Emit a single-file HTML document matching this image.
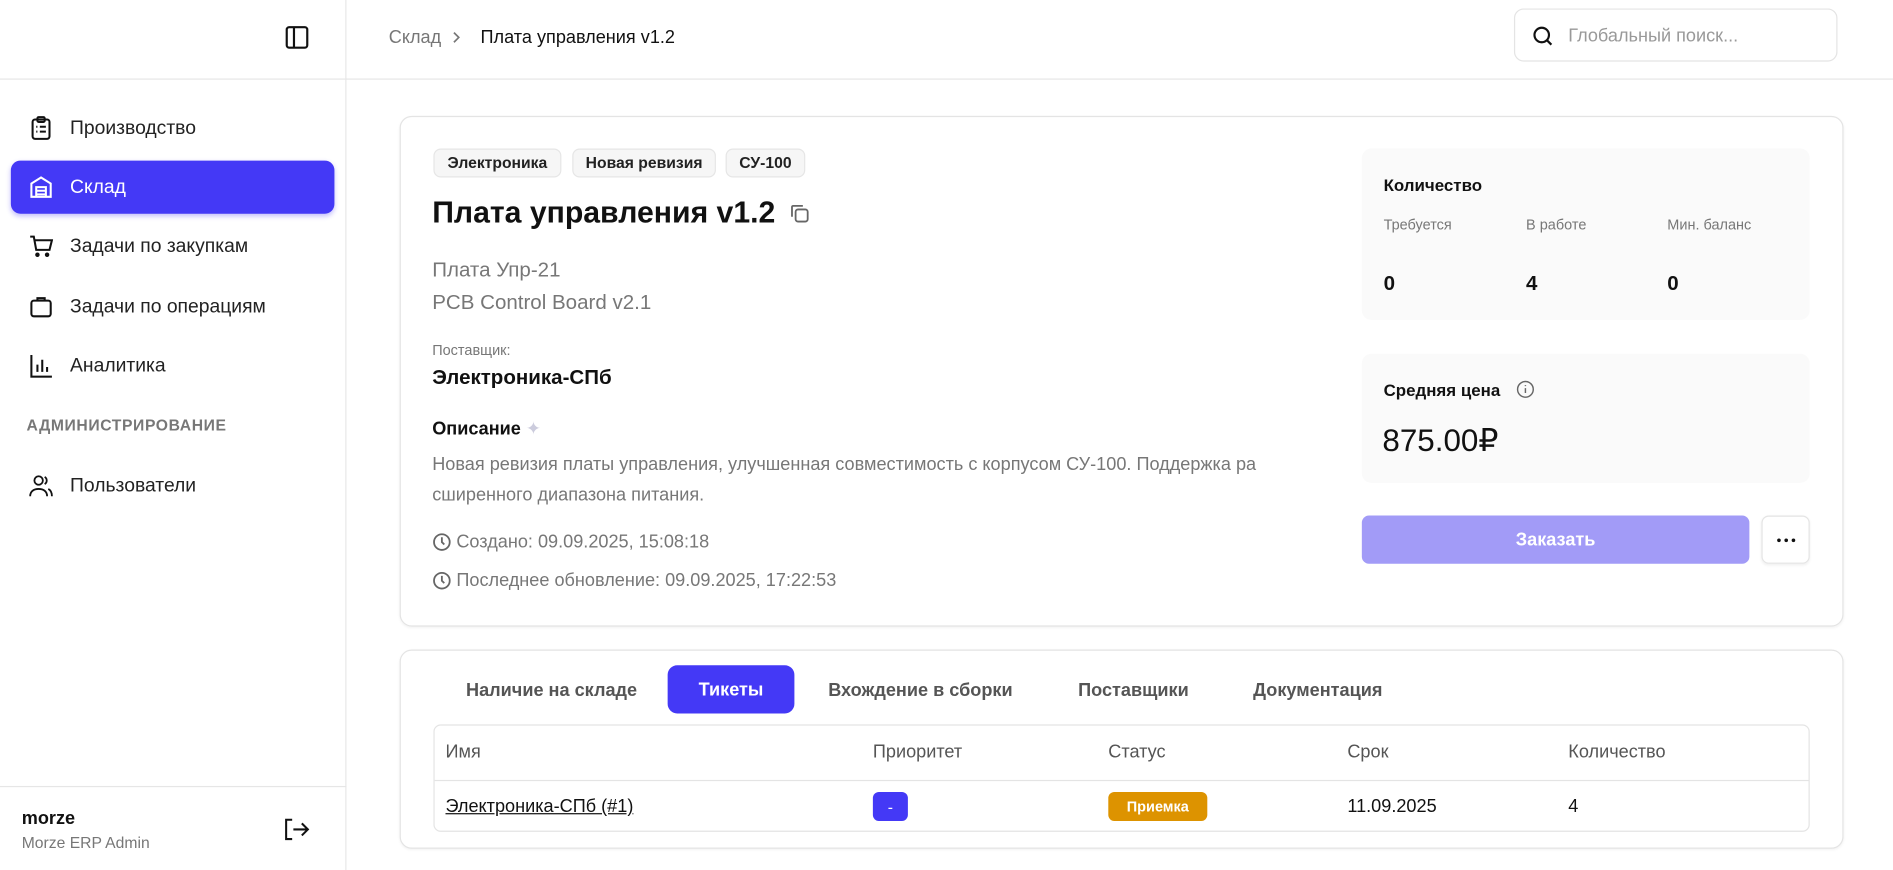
<!DOCTYPE html>
<html><head><meta charset="utf-8"><style>
*{box-sizing:border-box;margin:0;padding:0}
html,body{width:1893px;height:870px;overflow:hidden;background:#fff}
#w{position:absolute;left:0;top:0;width:1568px;height:721px;transform:scale(1.2073);transform-origin:0 0;font-family:"Liberation Sans","Noto Sans CJK SC",sans-serif;color:#111}
.a{position:absolute;white-space:nowrap}
.sb{position:absolute;left:0;top:0;width:287px;height:721px;border-right:1px solid #e8e8e8}
.hl{position:absolute;left:0;top:65px;width:1568px;height:1px;background:#e6e6e6}
.nav{position:absolute;left:58px;font-size:16px;color:#222;transform:translateY(-45%)}
.ic{position:absolute;left:24px;width:20px;height:20px;transform:translateY(-50%)}
.card{position:absolute;border:1px solid #e4e4e4;border-radius:10px;background:#fff;box-shadow:0 1px 2px rgba(0,0,0,.05)}
.tag{position:absolute;top:123px;height:24px;border:1px solid #e6e6e6;border-radius:6px;background:#f6f6f6;font-size:13px;font-weight:bold;line-height:22px;text-align:center;color:#222}
.g{color:#777}
.box{position:absolute;left:1128px;width:371px;background:#fafafa;border-radius:8px}
.m{transform:translateY(-50%)}
.th{font-size:15px;color:#555;top:623px}
.td{font-size:15px;color:#111;top:668px}
.btn{display:flex;align-items:center;justify-content:center}
</style></head><body><div id="w">
<div class="sb"></div>
<div class="hl"></div>
<svg class="a" style="left:236px;top:21px" width="20" height="20" viewBox="0 0 20 20" fill="none" stroke="#111" stroke-width="1.8"><rect x="1.5" y="1.5" width="17" height="17" rx="2"/><line x1="7.5" y1="2" x2="7.5" y2="18"/></svg>
<div class="a m" style="left:322px;top:31px;font-size:15px;color:#777">Склад</div>
<svg class="a" style="left:373px;top:25px" width="10" height="12" viewBox="0 0 10 12" fill="none" stroke="#777" stroke-width="1.4"><path d="M3 2l4 4-4 4"/></svg>
<div class="a m" style="left:398px;top:31px;font-size:15px;color:#111">Плата управления v1.2</div>
<div class="a" style="left:1254px;top:7px;width:268px;height:44px;border:1px solid #e4e4e4;border-radius:8px"></div>
<svg class="a" style="left:1269px;top:21px" width="18" height="18" viewBox="0 0 18 18" fill="none" stroke="#111" stroke-width="1.8"><circle cx="8" cy="8" r="6"/><line x1="12.5" y1="12.5" x2="16" y2="16"/></svg>
<div class="a m" style="left:1299px;top:30px;font-size:15px;color:#999">Глобальный поиск...</div>

<svg class="ic" style="top:106px" viewBox="0 0 20 20" fill="none" stroke="#111" stroke-width="1.7"><rect x="3" y="3" width="14" height="16" rx="2"/><rect x="7" y="1" width="6" height="4" rx="1"/><path d="M6 9h1M9 9h5M6 13h1M9 13h5"/></svg>
<div class="nav" style="top:106px">Производство</div>
<div class="a" style="left:9px;top:133px;width:268px;height:44px;background:#4439f6;border-radius:8px;box-shadow:0 2px 4px rgba(68,57,246,.3)"></div>
<svg class="ic" style="top:155px" viewBox="0 0 20 20" fill="none" stroke="#fff" stroke-width="1.7"><path d="M2 18V7l8-5 8 5v11z"/><path d="M6 18V10h8v8M6 13h8M6 16h8"/></svg>
<div class="nav" style="top:155px;color:#fff">Склад</div>
<svg class="ic" style="top:204px" viewBox="0 0 20 20" fill="none" stroke="#111" stroke-width="1.7"><path d="M1 2h3l2 11h11l2-8H5"/><circle cx="7" cy="17" r="1" fill="#111"/><circle cx="15" cy="17" r="1" fill="#111"/></svg>
<div class="nav" style="top:204px">Задачи по закупкам</div>
<svg class="ic" style="top:254px" viewBox="0 0 20 20" fill="none" stroke="#111" stroke-width="1.7"><rect x="2" y="5" width="16" height="13" rx="2"/><path d="M7 5V3h6v2"/></svg>
<div class="nav" style="top:254px">Задачи по операциям</div>
<svg class="ic" style="top:303px" viewBox="0 0 20 20" fill="none" stroke="#111" stroke-width="1.7"><path d="M2 1v18h17M7 15V9M11 15V5M15 15v-4"/></svg>
<div class="nav" style="top:303px">Аналитика</div>
<div class="a m" style="left:22px;top:352px;font-size:13px;font-weight:bold;color:#777;letter-spacing:.5px">АДМИНИСТРИРОВАНИЕ</div>
<svg class="ic" style="top:402px" viewBox="0 0 20 20" fill="none" stroke="#111" stroke-width="1.5"><circle cx="8" cy="6" r="3.5"/><path d="M1 19c0-4 3-6 7-6s7 2 7 6M13 3a3.5 3.5 0 0 1 0 6M16 13c2 1 3 3 3 6"/></svg>
<div class="nav" style="top:402px">Пользователи</div>
<div class="a" style="left:0;top:651px;width:287px;height:1px;background:#e6e6e6"></div>
<div class="a m" style="left:18px;top:678px;font-size:15px;font-weight:bold">morze</div>
<div class="a m" style="left:18px;top:698px;font-size:13px;color:#777">Morze ERP Admin</div>
<svg class="a" style="left:235px;top:677px" width="22" height="20" viewBox="0 0 22 20" fill="none" stroke="#111" stroke-width="1.7"><path d="M7 2H2v16h5M8 10h12M15 5l5 5-5 5"/></svg>

<div class="card" style="left:331px;top:96px;width:1196px;height:423px"></div>
<div class="tag" style="left:359px;width:106px">Электроника</div>
<div class="tag" style="left:474px;width:119px">Новая ревизия</div>
<div class="tag" style="left:601px;width:66px">СУ-100</div>
<div class="a m" style="left:358px;top:177px;font-size:25px;font-weight:bold;display:flex;align-items:center">Плата управления v1.2<svg style="margin-left:12px" width="17" height="17" viewBox="0 0 17 17" fill="none" stroke="#666" stroke-width="1.5"><rect x="5" y="5" width="10" height="10" rx="2"/><path d="M11 2H3a1 1 0 0 0-1 1v8"/></svg></div>
<div class="a m g" style="left:358px;top:224px;font-size:17px">Плата Упр-21</div>
<div class="a m g" style="left:358px;top:251px;font-size:17px">PCB Control Board v2.1</div>
<div class="a m g" style="left:358px;top:290px;font-size:12px">Поставщик:</div>
<div class="a m" style="left:358px;top:313px;font-size:17px;font-weight:bold">Электроника-СПб</div>
<div class="a m" style="left:358px;top:355px;font-size:15px;font-weight:bold">Описание <span style="color:#ccd;font-weight:normal">✦</span></div>
<div class="a m g" style="left:358px;top:385px;font-size:15px">Новая ревизия платы управления, улучшенная совместимость с корпусом СУ-100. Поддержка ра</div>
<div class="a m g" style="left:358px;top:410px;font-size:15px">сширенного диапазона питания.</div>
<svg class="a" style="left:358px;top:441px" width="16" height="16" viewBox="0 0 16 16" fill="none" stroke="#666" stroke-width="1.5"><circle cx="8" cy="8" r="6.5"/><path d="M8 4v4l2 2"/></svg>
<div class="a m g" style="left:378px;top:449px;font-size:15px">Создано: 09.09.2025, 15:08:18</div>
<svg class="a" style="left:358px;top:473px" width="16" height="16" viewBox="0 0 16 16" fill="none" stroke="#666" stroke-width="1.5"><circle cx="8" cy="8" r="6.5"/><path d="M8 4v4l2 2"/></svg>
<div class="a m g" style="left:378px;top:481px;font-size:15px">Последнее обновление: 09.09.2025, 17:22:53</div>

<div class="box" style="top:123px;height:142px"></div>
<div class="a m" style="left:1146px;top:153px;font-size:14px;font-weight:bold">Количество</div>
<div class="a m g" style="left:1146px;top:186px;font-size:12px">Требуется</div>
<div class="a m g" style="left:1264px;top:186px;font-size:12px">В работе</div>
<div class="a m g" style="left:1381px;top:186px;font-size:12px">Мин. баланс</div>
<div class="a m" style="left:1146px;top:235px;font-size:17px;font-weight:bold">0</div>
<div class="a m" style="left:1264px;top:235px;font-size:17px;font-weight:bold">4</div>
<div class="a m" style="left:1381px;top:235px;font-size:17px;font-weight:bold">0</div>
<div class="box" style="top:293px;height:107px"></div>
<div class="a m" style="left:1146px;top:323px;font-size:14px;font-weight:bold">Средняя цена</div>
<svg class="a" style="left:1256px;top:315px" width="15" height="15" viewBox="0 0 15 15" fill="none" stroke="#666" stroke-width="1.2"><circle cx="7.5" cy="7.5" r="6.5"/><path d="M7.5 6.5v4M7.5 4v.8"/></svg>
<div class="a m" style="left:1145px;top:365px;font-size:26px">875.00₽</div>
<div class="a btn" style="left:1128px;top:427px;width:321px;height:40px;background:#a29bf7;border-radius:6px;color:#fff;font-size:15px;font-weight:bold">Заказать</div>
<div class="a btn" style="left:1459px;top:427px;width:40px;height:40px;border:1px solid #e4e4e4;border-radius:6px;box-shadow:0 1px 2px rgba(0,0,0,.06);gap:3px"><i style="width:3px;height:3px;background:#111;border-radius:50%"></i><i style="width:3px;height:3px;background:#111;border-radius:50%"></i><i style="width:3px;height:3px;background:#111;border-radius:50%"></i></div>

<div class="card" style="left:331px;top:538px;width:1196px;height:165px"></div>
<div class="a m" style="left:386px;top:572px;font-size:15px;font-weight:bold;color:#555">Наличие на складе</div>
<div class="a btn" style="left:553px;top:551px;width:105px;height:40px;background:#4439f6;border-radius:8px;color:#fff;font-size:15px;font-weight:bold">Тикеты</div>
<div class="a m" style="left:686px;top:572px;font-size:15px;font-weight:bold;color:#555">Вхождение в сборки</div>
<div class="a m" style="left:893px;top:572px;font-size:15px;font-weight:bold;color:#555">Поставщики</div>
<div class="a m" style="left:1038px;top:572px;font-size:15px;font-weight:bold;color:#555">Документация</div>
<div class="a" style="left:359px;top:600px;width:1140px;height:89px;border:1px solid #e4e4e4;border-radius:6px"></div>
<div class="a" style="left:360px;top:646px;width:1138px;height:1px;background:#e4e4e4"></div>
<div class="a m th" style="left:369px">Имя</div>
<div class="a m th" style="left:723px">Приоритет</div>
<div class="a m th" style="left:918px">Статус</div>
<div class="a m th" style="left:1116px">Срок</div>
<div class="a m th" style="left:1299px">Количество</div>
<div class="a m td" style="left:369px;text-decoration:underline">Электроника-СПб (#1)</div>
<div class="a btn" style="left:723px;top:656px;width:29px;height:24px;background:#4439f6;border-radius:5px;color:#fff;font-size:13px">-</div>
<div class="a btn" style="left:918px;top:656px;width:82px;height:24px;background:#dd9300;border-radius:5px;color:#fff;font-size:12px;font-weight:bold">Приемка</div>
<div class="a m td" style="left:1116px">11.09.2025</div>
<div class="a m td" style="left:1299px">4</div>
</div></body></html>
